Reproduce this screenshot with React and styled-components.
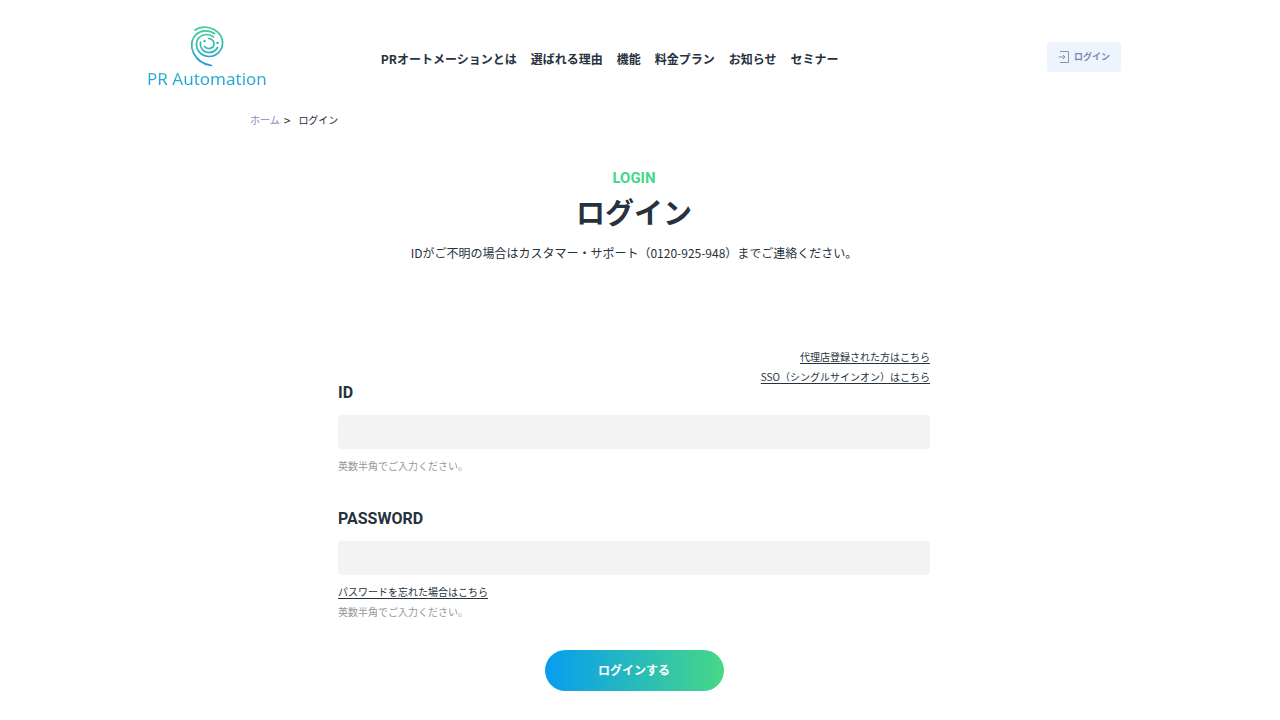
import React from "react";
import styled, { createGlobalStyle } from "styled-components";

const GlobalStyle = createGlobalStyle`
  * { box-sizing: border-box; }
  body {
    margin: 0;
    padding-right: 12px;
    background: #fff;
    color: #26323d;
    font-family: "Noto Sans CJK JP", "Noto Sans", sans-serif;
    font-size: 12px;
    line-height: 20px;
  }
`;

const Header = styled.header`
  display: flex;
  align-items: center;
  max-width: 974px;
  margin: 0 auto;
  padding: 26px 0 19px;
`;

const Logo = styled.a`
  display: flex;
  flex-direction: column;
  align-items: center;
  text-decoration: none;
  svg { display: block; }
`;

const LogoText = styled.span`
  font-family: "Noto Sans", sans-serif;
  font-size: 17px;
  line-height: 24px;
  white-space: nowrap;
  color: transparent;
  background: linear-gradient(#35b5c4 20%, #1f9fdc 80%);
  background-clip: text;
`;

const Nav = styled.nav`
  display: flex;
  gap: 14px;
  margin-left: 114px;
  margin-right: auto;
`;

const NavLink = styled.a`
  color: #26323d;
  font-weight: 700;
  text-decoration: none;
  white-space: nowrap;
`;

const HeaderLogin = styled.a`
  display: flex;
  align-items: center;
  gap: 4px;
  height: 30px;
  margin-bottom: 4px;
  padding: 0 11px;
  border-radius: 4px;
  background: #edf4fe;
  color: #7c8bab;
  font-size: 9px;
  font-weight: 700;
  text-decoration: none;
`;

const Breadcrumb = styled.nav`
  display: flex;
  gap: 4px;
  max-width: 768px;
  margin: 0 auto;
  font-size: 10px;
  a { color: #7f8dbb; text-decoration: none; }
`;

const Separator = styled.span`
  margin-right: 4px;
  font-size: 12px;
`;

const Intro = styled.section`
  margin-top: 38px;
  text-align: center;
`;

const Eyebrow = styled.p`
  margin: 0 0 4px;
  color: #45d58b;
  font-family: Roboto, sans-serif;
  font-size: 15px;
  font-weight: 700;
`;

const Title = styled.h1`
  margin: 0 0 12px;
  font-size: 29px;
  line-height: 39px;
  font-weight: 700;
`;

const Lead = styled.p`
  margin: 0;
`;

const Form = styled.form`
  display: flex;
  flex-direction: column;
  max-width: 592px;
  margin: 84px auto 28px;
`;

const SideLinks = styled.div`
  display: flex;
  flex-direction: column;
  align-items: flex-end;
  align-self: flex-end;
  margin-bottom: -6px;
`;

const TextLink = styled.a`
  color: #26323d;
  font-size: 10px;
  text-decoration: underline;
  text-underline-offset: 2px;
`;

const Field = styled.div`
  display: flex;
  flex-direction: column;
  align-items: flex-start;
  & + & { margin-top: 31px; }
`;

const Label = styled.label`
  margin-bottom: 10px;
  font-family: Roboto, sans-serif;
  font-size: 16px;
  line-height: 24px;
  font-weight: 700;
`;

const Input = styled.input`
  width: 100%;
  height: 34px;
  margin-bottom: 7px;
  padding: 0 10px;
  border: 0;
  border-radius: 4px;
  background: #f3f3f3;
  font: inherit;
`;

const Hint = styled.span`
  color: #969696;
  font-size: 10px;
`;

const Submit = styled.button`
  align-self: center;
  width: 179px;
  height: 41px;
  margin-top: 28px;
  padding: 0 0 2px;
  border: 0;
  border-radius: 21px;
  background: linear-gradient(90deg, #079df0, #48d787);
  color: #fff;
  font: inherit;
  font-weight: 700;
`;

const navItems = [
  "PRオートメーションとは",
  "選ばれる理由",
  "機能",
  "料金プラン",
  "お知らせ",
  "セミナー",
];

function LogoMark() {
  return (
    <svg width="34" height="41" viewBox="0 0 34 41" fill="none" aria-hidden="true">
      <defs>
        <linearGradient id="mark" x1="0" y1="0" x2="0" y2="41" gradientUnits="userSpaceOnUse">
          <stop offset="0" stopColor="#43d08c" />
          <stop offset="0.5" stopColor="#32b8b4" />
          <stop offset="1" stopColor="#1a94e6" />
        </linearGradient>
      </defs>
      <g stroke="url(#mark)" strokeWidth="1.7" strokeLinecap="round">
        <path d="M5 4C10 .5 18 0 24 3.500C30 7 33 12 32.500 18C32 25 26 30.500 19 30.500C12 30.500 6.500 25 6.500 18.500C6.500 12.500 11 8.500 16.500 8.500C20 8.500 22 9.500 23.500 11" />
        <path d="M24.500 7.500C19 3.500 11 4 6 8.500C1 13.500 .5 21 3.500 27C7 34 14 38.500 21.500 39.500" />
        <path d="M10.500 16C9.500 21 13 26.500 18.500 26.500C23 26.500 26 24.500 27.500 21.500" />
        <path d="M18.500 12.500C22 12.500 24.500 15.500 24 18.500C23.500 22.500 17.500 24 14.500 20.500" />
      </g>
      <circle cx="14.500" cy="15" r="1.200" fill="#32b8b4" />
      <circle cx="27.500" cy="17" r="1.200" fill="#2bb0c0" />
    </svg>
  );
}

function EnterIcon() {
  return (
    <svg width="12" height="12" viewBox="0 0 12 12" fill="none" stroke="#8695b5" strokeWidth="1" aria-hidden="true">
      <path d="M2 .5H10.500V11.500H2M.5 6H7M5 4L7 6L5 8" />
    </svg>
  );
}

export default function App() {
  return (
    <>
      <GlobalStyle />
      <Header>
        <Logo href="#">
          <LogoMark />
          <LogoText>PR Automation</LogoText>
        </Logo>
        <Nav>
          {navItems.map((item) => (
            <NavLink key={item} href="#">{item}</NavLink>
          ))}
        </Nav>
        <HeaderLogin href="#">
          <EnterIcon />
          ログイン
        </HeaderLogin>
      </Header>
      <main>
        <Breadcrumb>
          <a href="#">ホーム</a>
          <Separator>&gt;</Separator>
          <span>ログイン</span>
        </Breadcrumb>
        <Intro>
          <Eyebrow>LOGIN</Eyebrow>
          <Title>ログイン</Title>
          <Lead>IDがご不明の場合はカスタマー・サポート（0120-925-948）までご連絡ください。</Lead>
        </Intro>
        <Form>
          <SideLinks>
            <TextLink href="#">代理店登録された方はこちら</TextLink>
            <TextLink href="#">SSO（シングルサインオン）はこちら</TextLink>
          </SideLinks>
          <Field>
            <Label htmlFor="login-id">ID</Label>
            <Input id="login-id" type="text" />
            <Hint>英数半角でご入力ください。</Hint>
          </Field>
          <Field>
            <Label htmlFor="login-password">PASSWORD</Label>
            <Input id="login-password" type="password" />
            <TextLink href="#">パスワードを忘れた場合はこちら</TextLink>
            <Hint>英数半角でご入力ください。</Hint>
          </Field>
          <Submit type="button">ログインする</Submit>
        </Form>
      </main>
    </>
  );
}
